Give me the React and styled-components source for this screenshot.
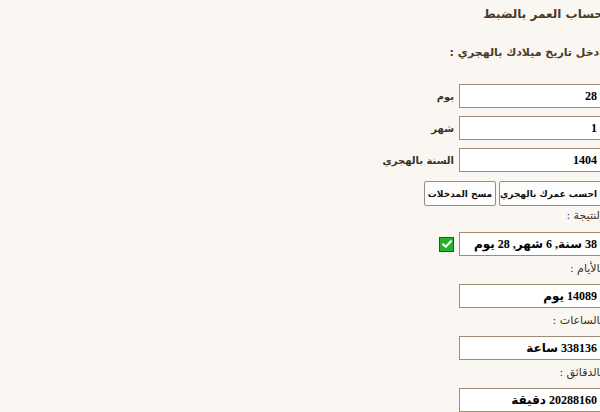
import styled, { createGlobalStyle } from "styled-components";

const GlobalStyle = createGlobalStyle`
  html, body {
    margin: 0;
    padding: 0;
    overflow: hidden;
    background: #faf7f2;
  }
`;

const fields = [
  { label: "يوم", value: "28" },
  { label: "شهر", value: "1" },
  { label: "السنة بالهجري", value: "1404" },
];

const results = [
  { label: "بالأيام :", value: "14089 يوم" },
  { label: "بالساعات :", value: "338136 ساعة" },
  { label: "بالدقائق :", value: "20288160 دقيقة" },
];

export default function App() {
  return (
    <>
      <GlobalStyle />
      <Page>
        <Title>حساب العمر بالضبط</Title>
        <SubTitle>ادخل تاريخ ميلادك بالهجري :</SubTitle>
        <Form>
          {fields.map((f) => (
            <Row key={f.label}>
              <Field defaultValue={f.value} />
              <Label>{f.label}</Label>
            </Row>
          ))}
          <Buttons>
            <Button $wide>احسب عمرك بالهجري</Button>
            <Button>مسح المدخلات</Button>
          </Buttons>
        </Form>
        <ResultLabel $first>النتيجة :</ResultLabel>
        <Row>
          <Field readOnly defaultValue="38 سنة, 6 شهر, 28 يوم" />
          <Check>
            <svg width="10" height="8" viewBox="0 0 10 8">
              <path
                d="M1 4.2 L3.8 6.8 L9 1.2"
                fill="none"
                stroke="#fff"
                strokeWidth="2"
                strokeLinecap="round"
                strokeLinejoin="round"
              />
            </svg>
          </Check>
        </Row>
        {results.map((r) => (
          <div key={r.label}>
            <ResultLabel>{r.label}</ResultLabel>
            <Row>
              <Field readOnly defaultValue={r.value} />
            </Row>
          </div>
        ))}
      </Page>
    </>
  );
}

const Page = styled.div`
  width: 603px;
  direction: rtl;
  font-family: "DejaVu Sans", Tahoma, sans-serif;
  color: #3d3024;
`;

const Title = styled.h2`
  margin: 0;
  padding-top: 4px;
  font-size: 12px;
  line-height: 20px;
  font-weight: bold;
  color: #4a3a2a;
`;

const SubTitle = styled.h3`
  margin: 19px 0 0;
  font-size: 11px;
  line-height: 20px;
  font-weight: bold;
  color: #4a3a2a;
`;

const Form = styled.div`
  display: flex;
  flex-direction: column;
  gap: 8px;
  margin-top: 21px;
`;

const Row = styled.div`
  display: flex;
  align-items: center;
  gap: 5px;
`;

const Field = styled.input`
  box-sizing: border-box;
  width: 144px;
  height: 24px;
  margin: 0;
  padding: 0 5px;
  border: 1px solid #9d8d75;
  background: #fff;
  font-family: "Liberation Serif", "DejaVu Sans", serif;
  font-size: 12px;
  font-weight: bold;
  color: #000;
  direction: rtl;
  outline: none;
`;

const Label = styled.span`
  font-size: 10px;
  font-weight: bold;
  color: #3d3024;
`;

const Buttons = styled.div`
  display: flex;
  gap: 3px;
  margin-top: 1px;
`;

const Button = styled.button`
  box-sizing: border-box;
  height: 25px;
  width: ${(p) => (p.$wide ? "104px" : "72px")};
  margin: 0;
  padding: 0 2px;
  border: 1px solid #8f8f8f;
  border-radius: 2px;
  background: #fdfdfd;
  font-family: "DejaVu Sans", Tahoma, sans-serif;
  font-size: 9px;
  font-weight: bold;
  color: #111;
  white-space: nowrap;
  direction: rtl;
  text-align: ${(p) => (p.$wide ? "right" : "center")};
  padding-right: ${(p) => (p.$wide ? "5px" : "2px")};
`;

const ResultLabel = styled.div`
  font-size: 11px;
  line-height: 18px;
  margin: ${(p) => (p.$first ? "1px 0 7px" : "4px 0 6px")};
  color: #3d3024;
`;

const Check = styled.span`
  box-sizing: border-box;
  display: inline-flex;
  align-items: center;
  justify-content: center;
  width: 15px;
  height: 15px;
  background: #22b52a;
  border: 1px solid #17631b;
`;
